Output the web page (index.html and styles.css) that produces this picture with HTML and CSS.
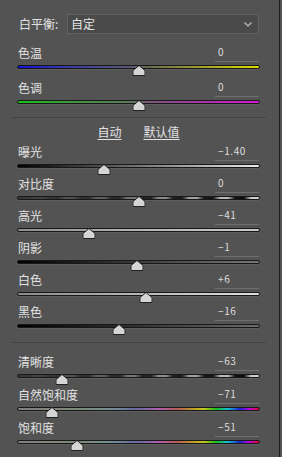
FILE: index.html
```html
<!DOCTYPE html>
<html lang="zh">
<head>
<meta charset="utf-8">
<link rel="stylesheet" href="styles.css">
</head>
<body>
<div class="panel">
  <div class="wb">
    <span class="wb-label">白平衡:</span>
    <div class="select">
      <span>自定</span>
      <svg class="chev" width="8" height="5" viewBox="0 0 8 5"><path d="M0.5 0.5 L4 4 L7.5 0.5" fill="none" stroke="#bdbdbd" stroke-width="1.2"/></svg>
    </div>
  </div>

  <div class="row tall">
    <div class="head"><span class="label">色温</span><span class="value">0</span></div>
    <div class="wrap"><div class="track t-temp"></div><svg class="thumb" style="left:50%" width="13" height="11" viewBox="0 0 13 11"><polygon points="6.5,0.5 12.5,5.5 12.5,10.5 0.5,10.5 0.5,5.5"/></svg></div>
  </div>
  <div class="row">
    <div class="head"><span class="label">色调</span><span class="value">0</span></div>
    <div class="wrap"><div class="track t-tint"></div><svg class="thumb" style="left:50%" width="13" height="11" viewBox="0 0 13 11"><polygon points="6.5,0.5 12.5,5.5 12.5,10.5 0.5,10.5 0.5,5.5"/></svg></div>
  </div>

  <div class="sep sep1"></div>
  <div class="links"><span class="link">自动</span><span class="link">默认值</span></div>

  <div class="row">
    <div class="head"><span class="label">曝光</span><span class="value">−1.40</span></div>
    <div class="wrap"><div class="track t-exp"></div><svg class="thumb" style="left:36%" width="13" height="11" viewBox="0 0 13 11"><polygon points="6.5,0.5 12.5,5.5 12.5,10.5 0.5,10.5 0.5,5.5"/></svg></div>
  </div>
  <div class="row">
    <div class="head"><span class="label">对比度</span><span class="value">0</span></div>
    <div class="wrap"><div class="track t-tex"></div><svg class="thumb" style="left:50%" width="13" height="11" viewBox="0 0 13 11"><polygon points="6.5,0.5 12.5,5.5 12.5,10.5 0.5,10.5 0.5,5.5"/></svg></div>
  </div>
  <div class="row">
    <div class="head"><span class="label">高光</span><span class="value">−41</span></div>
    <div class="wrap"><div class="track t-high"></div><svg class="thumb" style="left:29.5%" width="13" height="11" viewBox="0 0 13 11"><polygon points="6.5,0.5 12.5,5.5 12.5,10.5 0.5,10.5 0.5,5.5"/></svg></div>
  </div>
  <div class="row">
    <div class="head"><span class="label">阴影</span><span class="value">−1</span></div>
    <div class="wrap"><div class="track t-shad"></div><svg class="thumb" style="left:49.5%" width="13" height="11" viewBox="0 0 13 11"><polygon points="6.5,0.5 12.5,5.5 12.5,10.5 0.5,10.5 0.5,5.5"/></svg></div>
  </div>
  <div class="row">
    <div class="head"><span class="label">白色</span><span class="value">+6</span></div>
    <div class="wrap"><div class="track t-white"></div><svg class="thumb" style="left:53%" width="13" height="11" viewBox="0 0 13 11"><polygon points="6.5,0.5 12.5,5.5 12.5,10.5 0.5,10.5 0.5,5.5"/></svg></div>
  </div>
  <div class="row">
    <div class="head"><span class="label">黑色</span><span class="value">−16</span></div>
    <div class="wrap"><div class="track t-black"></div><svg class="thumb" style="left:42%" width="13" height="11" viewBox="0 0 13 11"><polygon points="6.5,0.5 12.5,5.5 12.5,10.5 0.5,10.5 0.5,5.5"/></svg></div>
  </div>

  <div class="sep sep2"></div>

  <div class="row low">
    <div class="head"><span class="label">清晰度</span><span class="value">−63</span></div>
    <div class="wrap"><div class="track t-tex"></div><svg class="thumb" style="left:18.5%" width="13" height="11" viewBox="0 0 13 11"><polygon points="6.5,0.5 12.5,5.5 12.5,10.5 0.5,10.5 0.5,5.5"/></svg></div>
  </div>
  <div class="row low">
    <div class="head"><span class="label">自然饱和度</span><span class="value">−71</span></div>
    <div class="wrap"><div class="track t-sat"></div><svg class="thumb" style="left:14.5%" width="13" height="11" viewBox="0 0 13 11"><polygon points="6.5,0.5 12.5,5.5 12.5,10.5 0.5,10.5 0.5,5.5"/></svg></div>
  </div>
  <div class="row low">
    <div class="head"><span class="label">饱和度</span><span class="value">−51</span></div>
    <div class="wrap"><div class="track t-sat"></div><svg class="thumb" style="left:24.5%" width="13" height="11" viewBox="0 0 13 11"><polygon points="6.5,0.5 12.5,5.5 12.5,10.5 0.5,10.5 0.5,5.5"/></svg></div>
  </div>
</div>
</body>
</html>
```

FILE: styles.css
```css
html, body {
  margin: 0;
  padding: 0;
  background: #535353;
}
body {
  width: 282px;
  height: 457px;
  overflow: hidden;
  font-family: "Noto Sans CJK SC", "Noto Sans", sans-serif;
  color: #e2e2e2;
}
.panel {
  width: 280px;
  height: 457px;
  box-sizing: border-box;
  border-right: 1px solid #1c1c1c;
  padding: 14px 19px 0 17px;
}
.wb {
  display: flex;
  align-items: center;
  height: 20px;
}
.wb-label {
  font-size: 12px;
  line-height: 20px;
  padding-left: 2px;
}
.select {
  margin-left: auto;
  margin-right: 1px;
  width: 192px;
  height: 20px;
  box-sizing: border-box;
  border: 1px solid #616161;
  background: #4a4a4a;
  display: flex;
  align-items: center;
  padding-left: 3px;
  padding-right: 6px;
  font-size: 12px;
}
.select span { flex: 1; line-height: 18px; }
.chev { display: block; }

.row {
  height: 32px;
}
.row.tall {
  margin-top: 10px;
  height: 35px;
}
.row.low {
  height: 33px;
}
.head {
  display: flex;
  justify-content: space-between;
  align-items: flex-start;
  height: 18px;
}
.label {
  font-size: 12px;
  line-height: 17px;
  padding-left: 1px;
}
.value {
  width: 44px;
  height: 18px;
  box-sizing: border-box;
  border-bottom: 1px solid #6f6f6f;
  margin-right: 1px;
  padding-left: 3px;
  font-family: "Noto Sans CJK SC", "Noto Sans", sans-serif;
  font-size: 10px;
  letter-spacing: 0.6px;
  line-height: 16px;
  color: #dedede;
}
.wrap {
  position: relative;
  height: 14px;
}
.track {
  margin-top: 3px;
  height: 4px;
  box-sizing: border-box;
  border: 1px solid #181818;
  border-radius: 2px;
  box-shadow: 0 1px 0 #5e5e5e;
}
.thumb {
  position: absolute;
  top: 0;
  transform: translateX(-50%);
  display: block;
}
.thumb polygon {
  fill: #d5d5d5;
  stroke: #222;
  stroke-width: 1;
}

.t-temp { background: linear-gradient(90deg, #1212d6 0%, #3a3aa6 20%, #5a5a72 47%, #6a6a52 54%, #aaaa28 80%, #dcdc00 100%); }
.t-tint { background: linear-gradient(90deg, #18c418 0%, #3c9a3c 20%, #5c785c 47%, #7a5a7a 54%, #b030b0 80%, #d81ad8 100%); }
.t-exp { background: linear-gradient(90deg, #000 0%, #6a6a6a 45%, #ececec 100%); }
.t-high { background: linear-gradient(90deg, #8e8e8e 0%, #b4b4b4 50%, #cacaca 100%); }
.t-shad { background: linear-gradient(90deg, #000 0%, #3c3c3c 50%, #787878 100%); }
.t-white { background: linear-gradient(90deg, #8a8a8a 0%, #b8b8b8 50%, #e0e0e0 100%); }
.t-black { background: linear-gradient(90deg, #000 0%, #333 50%, #6c6c6c 100%); }
.t-tex {
  background:
    linear-gradient(90deg, rgba(58,58,58,1) 0%, rgba(58,58,58,0.75) 35%, rgba(58,58,58,0) 100%),
    repeating-linear-gradient(90deg, #0a0a0a 0px, #0a0a0a 9px, #d2d2d2 16px, #d2d2d2 24px, #0a0a0a 31px);
}
.t-sat {
  background:
    linear-gradient(90deg, rgba(128,128,128,1) 0%, rgba(128,128,128,0.85) 35%, rgba(128,128,128,0.4) 65%, rgba(128,128,128,0) 100%),
    linear-gradient(90deg, #e04040 0%, #e0e040 12%, #40e040 24%, #40e0e0 36%, #4040e0 48%, #e040e0 58%, #e04040 66%, #e0a000 72%, #e0e000 77%, #00d000 82%, #00c8e0 87%, #1818e0 92%, #c000e0 96%, #e00030 100%);
}

.sep {
  height: 1px;
  background: #444;
  margin-left: -5px;
  margin-right: -6px;
}
.sep1 { margin-top: 6px; }
.sep2 { margin-top: 7px; margin-bottom: 10px; }

.links {
  display: flex;
  justify-content: center;
  gap: 22px;
  margin-top: 4px;
  height: 21px;
}
.link {
  font-size: 12px;
  line-height: 20px;
  text-decoration: underline;
  text-underline-offset: 2px;
}
```
